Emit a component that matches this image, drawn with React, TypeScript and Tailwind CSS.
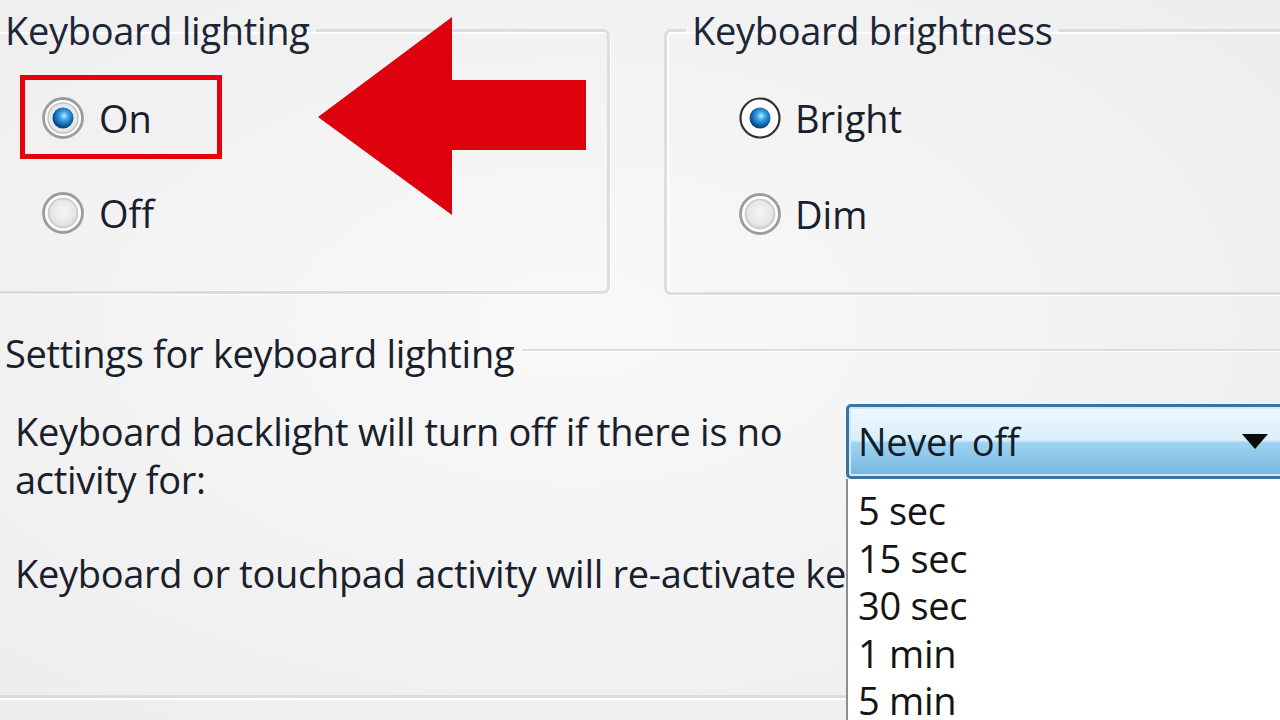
import React from "react";

const Radio = ({ id, checked, dark }: { id: string; checked?: boolean; dark?: boolean }) => (
  <svg width="44" height="44" viewBox="0 0 44 44" className="shrink-0">
    <defs>
      <radialGradient id={`bg-${id}`} cx="50%" cy="45%" r="60%">
        <stop offset="0%" stopColor="#f6f6f6" />
        <stop offset="70%" stopColor="#e6e6e6" />
        <stop offset="100%" stopColor="#d0d0d0" />
      </radialGradient>
      <radialGradient id={`dot-${id}`} cx="55%" cy="40%" r="65%">
        <stop offset="0%" stopColor="#bdeeff" />
        <stop offset="30%" stopColor="#3fa9ea" />
        <stop offset="70%" stopColor="#0f5fa8" />
        <stop offset="100%" stopColor="#0a2c5c" />
      </radialGradient>
    </defs>
    <circle cx="22" cy="22" r="19.5" fill="#fdfdfd" stroke={dark ? "#303030" : "#9c9c9c"} strokeWidth={dark ? 2.2 : 2.8} />
    {!checked && <circle cx="22" cy="22" r="14.5" fill={`url(#bg-${id})`} stroke="#c9c9c9" strokeWidth="1.6" />}
    {checked && (
      <>
        {!dark && <circle cx="22" cy="22" r="15" fill="#e9e9e9" stroke="#c2c2c2" strokeWidth="1.5" />}
        <circle cx="22" cy="22" r="10.5" fill={`url(#dot-${id})`} />
      </>
    )}
  </svg>
);

const groupBox =
  "border-[3px] border-[#d6dfe5] rounded-[7px] shadow-[inset_2px_2px_0_#ffffff,1px_1px_0_#ffffff]";

export default function App() {
  return (
    <div
      className="relative w-[1280px] h-[720px] overflow-hidden bg-[radial-gradient(ellipse_at_45%_45%,#f9f9f9_0%,#f1f1f1_60%,#ececec_100%)] text-[#18202b] text-[38px] font-[500]"
      style={{ fontFamily: '"Open Sans", "Noto Sans", sans-serif' }}
    >
      {/* Top row: two group boxes */}
      <div className="flex pt-[8px] gap-[54px] ml-[-23px] mr-[-40px]">
        <fieldset className={`${groupBox} w-[633px] shrink-0 h-[286px]`}>
          <legend className="ml-[19px] px-[6px] leading-[44px] tracking-[-0.3px] text-[#1c2636]">Keyboard lighting</legend>
          <div className="flex flex-col gap-[47px] pt-[42px] pl-[61px]">
            <div className="flex items-center gap-[14px] h-[48px]">
              <Radio id="on" checked />
              <span>On</span>
            </div>
            <div className="flex items-center gap-[14px] h-[48px]">
              <Radio id="off" />
              <span>Off</span>
            </div>
          </div>
        </fieldset>
        <fieldset className={`${groupBox} flex-1 h-[287px]`}>
          <legend className="ml-[19px] px-[6px] leading-[44px] tracking-[-0.3px] text-[#1c2636]">Keyboard brightness</legend>
          <div className="flex flex-col gap-[48px] pt-[42px] pl-[71px]">
            <div className="flex items-center gap-[13px] h-[48px]">
              <Radio id="bright" checked dark />
              <span>Bright</span>
            </div>
            <div className="flex items-center gap-[13px] h-[48px]">
              <Radio id="dim" />
              <span>Dim</span>
            </div>
          </div>
        </fieldset>
      </div>

      {/* Settings heading */}
      <div className="flex items-center mt-[36px] pl-[5px]">
        <span className="leading-[44px] tracking-[-0.3px] whitespace-nowrap">Settings for keyboard lighting</span>
        <div className="flex-1 ml-[8px] mt-[-6px] h-[2px] bg-[#d6dfe5] shadow-[0_1px_0_#ffffff]" />
      </div>

      {/* Backlight timeout row */}
      <div className="flex items-start mt-[32px]">
        <p className="w-[846px] shrink-0 pl-[15px] leading-[48px] tracking-[-0.3px] whitespace-nowrap">
          Keyboard backlight will turn off if there is no
          <br />
          activity for:
        </p>
        <div className="relative shrink-0 mt-[-3px]">
          <div className="w-[440px] h-[75px] flex items-center justify-between pl-[9px] pr-[15px] border-[3px] border-[#3a74a3] rounded-l-[5px] bg-[linear-gradient(to_bottom,#eef8fe_0%,#d9effb_48%,#a0d3f1_52%,#74b7e0_100%)] shadow-[inset_0_0_0_2px_#cfe9f8]">
            <span className="tracking-[-0.3px] text-[#141c28]">Never off</span>
            <svg width="26" height="16" viewBox="0 0 26 16">
              <polygon points="0,0 26,0 13,15" fill="#0b0b0b" />
            </svg>
          </div>
          <ul className="absolute left-0 top-full w-[440px] h-[260px] bg-white border-l-[2px] border-[#8e8e8e] pl-[10px] pt-[8px] leading-[47.5px] tracking-[-0.3px] text-[#141414]">
            <li>5 sec</li>
            <li>15 sec</li>
            <li>30 sec</li>
            <li>1 min</li>
            <li>5 min</li>
          </ul>
        </div>
      </div>

      <div className="mt-[46px] w-[846px] overflow-hidden">
        <p className="pl-[15px] leading-[48px] tracking-[-0.3px] whitespace-nowrap">
          Keyboard or touchpad activity will re-activate keyboard backlight
        </p>
      </div>

      <div className="mt-[98px] h-[3px] bg-[#d6dfe5] shadow-[0_2px_0_#ffffff]" />

      {/* Annotation overlays */}
      <div className="absolute left-[20px] top-[75px] w-[202px] h-[84px] border-[5px] border-[#e6000b]" />
      <svg className="absolute left-[316px] top-[15px]" width="274" height="204" viewBox="0 0 274 204">
        <polygon points="2,102 136,2 136,65 270,65 270,135 136,135 136,200" fill="#de000d" />
      </svg>
    </div>
  );
}
